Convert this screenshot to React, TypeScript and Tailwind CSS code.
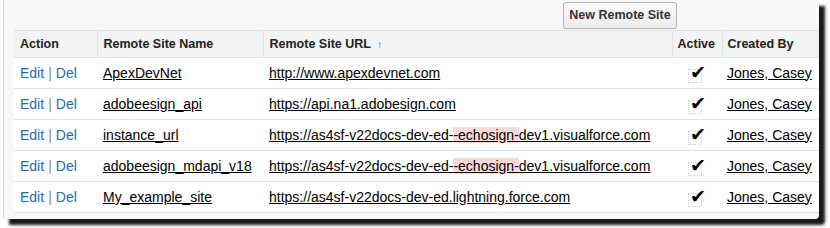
import React from "react";

type Site = {
  name: string;
  url: React.ReactNode;
};

const sites: Site[] = [
  { name: "ApexDevNet", url: "http://www.apexdevnet.com" },
  { name: "adobeesign_api", url: "https://api.na1.adobesign.com" },
  {
    name: "instance_url",
    url: (
      <>
        https://as4sf-v22docs-dev-ed-
        <span className="bg-[#fcd9d9]">-echosign-</span>
        dev1.visualforce.com
      </>
    ),
  },
  {
    name: "adobeesign_mdapi_v18",
    url: (
      <>
        https://as4sf-v22docs-dev-ed-
        <span className="bg-[#fcd9d9]">-echosign-</span>
        dev1.visualforce.com
      </>
    ),
  },
  { name: "My_example_site", url: "https://as4sf-v22docs-dev-ed.lightning.force.com" },
];

function Check() {
  return (
    <span className="relative inline-block h-[14px] w-[14px] translate-x-[-2px] translate-y-[2px] border border-dotted border-[#cfcfcf] align-middle">
      <span className="absolute left-[1px] top-[-7px] text-[19px] leading-[19px] text-black">✔</span>
    </span>
  );
}

export default function App() {
  return (
    <div className="h-[228px] w-[830px] overflow-hidden bg-white font-['Liberation_Sans',Arial,sans-serif]">
      <div className="ml-[3px] h-[219px] w-[816px] overflow-hidden rounded-br-[4px] border-l border-[#d8d8e8] bg-[#f8f8f8] pt-[2px] pl-[10px] shadow-[6px_6px_3px_rgba(0,0,0,0.9)]">
        <div className="h-[28px]">
          <button className="ml-[549px] h-[27px] w-[114px] rounded-[3px] border border-[#b5b5b5] bg-gradient-to-b from-[#fbfbfb] to-[#ececec] text-[12.5px] font-bold text-[#333]">
            New Remote Site
          </button>
        </div>
        <table className="w-[806px] table-fixed border-collapse bg-white text-[14px]">
          <colgroup>
            <col className="w-[83px]" />
            <col className="w-[166px]" />
            <col className="w-[409px]" />
            <col className="w-[50px]" />
            <col className="w-[98px]" />
          </colgroup>
          <thead>
            <tr className="h-[27px] border-y border-[#e0e3e5] bg-[#f2f3f3] text-left text-[12.5px] font-bold text-[#222]">
              <th className="border-r border-[#e0e3e5] px-[6px] font-bold">Action</th>
              <th className="border-r border-[#e0e3e5] px-[6px] font-bold">Remote Site Name</th>
              <th className="border-r border-[#e0e3e5] px-[6px] font-bold">
                Remote Site URL <span className="ml-[3px] text-[10px] text-[#555]">↑</span>
              </th>
              <th className="border-r border-[#e0e3e5] px-[5px] font-bold">Active</th>
              <th className="px-[5px] font-bold whitespace-nowrap">Created By</th>
            </tr>
          </thead>
          <tbody>
            {sites.map((s) => (
              <tr key={s.name} className="h-[31px] border-b border-[#e3e3e3]">
                <td className="px-[6px] whitespace-nowrap">
                  <a className="text-[#1f6bb5]">Edit</a>
                  <span className="px-[4px] text-[#888]">|</span>
                  <a className="text-[#1f6bb5]">Del</a>
                </td>
                <td className="px-[6px] whitespace-nowrap">
                  <a className="text-black underline">{s.name}</a>
                </td>
                <td className="px-[6px] whitespace-nowrap">
                  <a className="text-black underline">{s.url}</a>
                </td>
                <td className="text-center">
                  <Check />
                </td>
                <td className="px-[5px] whitespace-nowrap">
                  <a className="text-black underline">Jones, Casey</a>
                </td>
              </tr>
            ))}
          </tbody>
        </table>
      </div>
    </div>
  );
}
